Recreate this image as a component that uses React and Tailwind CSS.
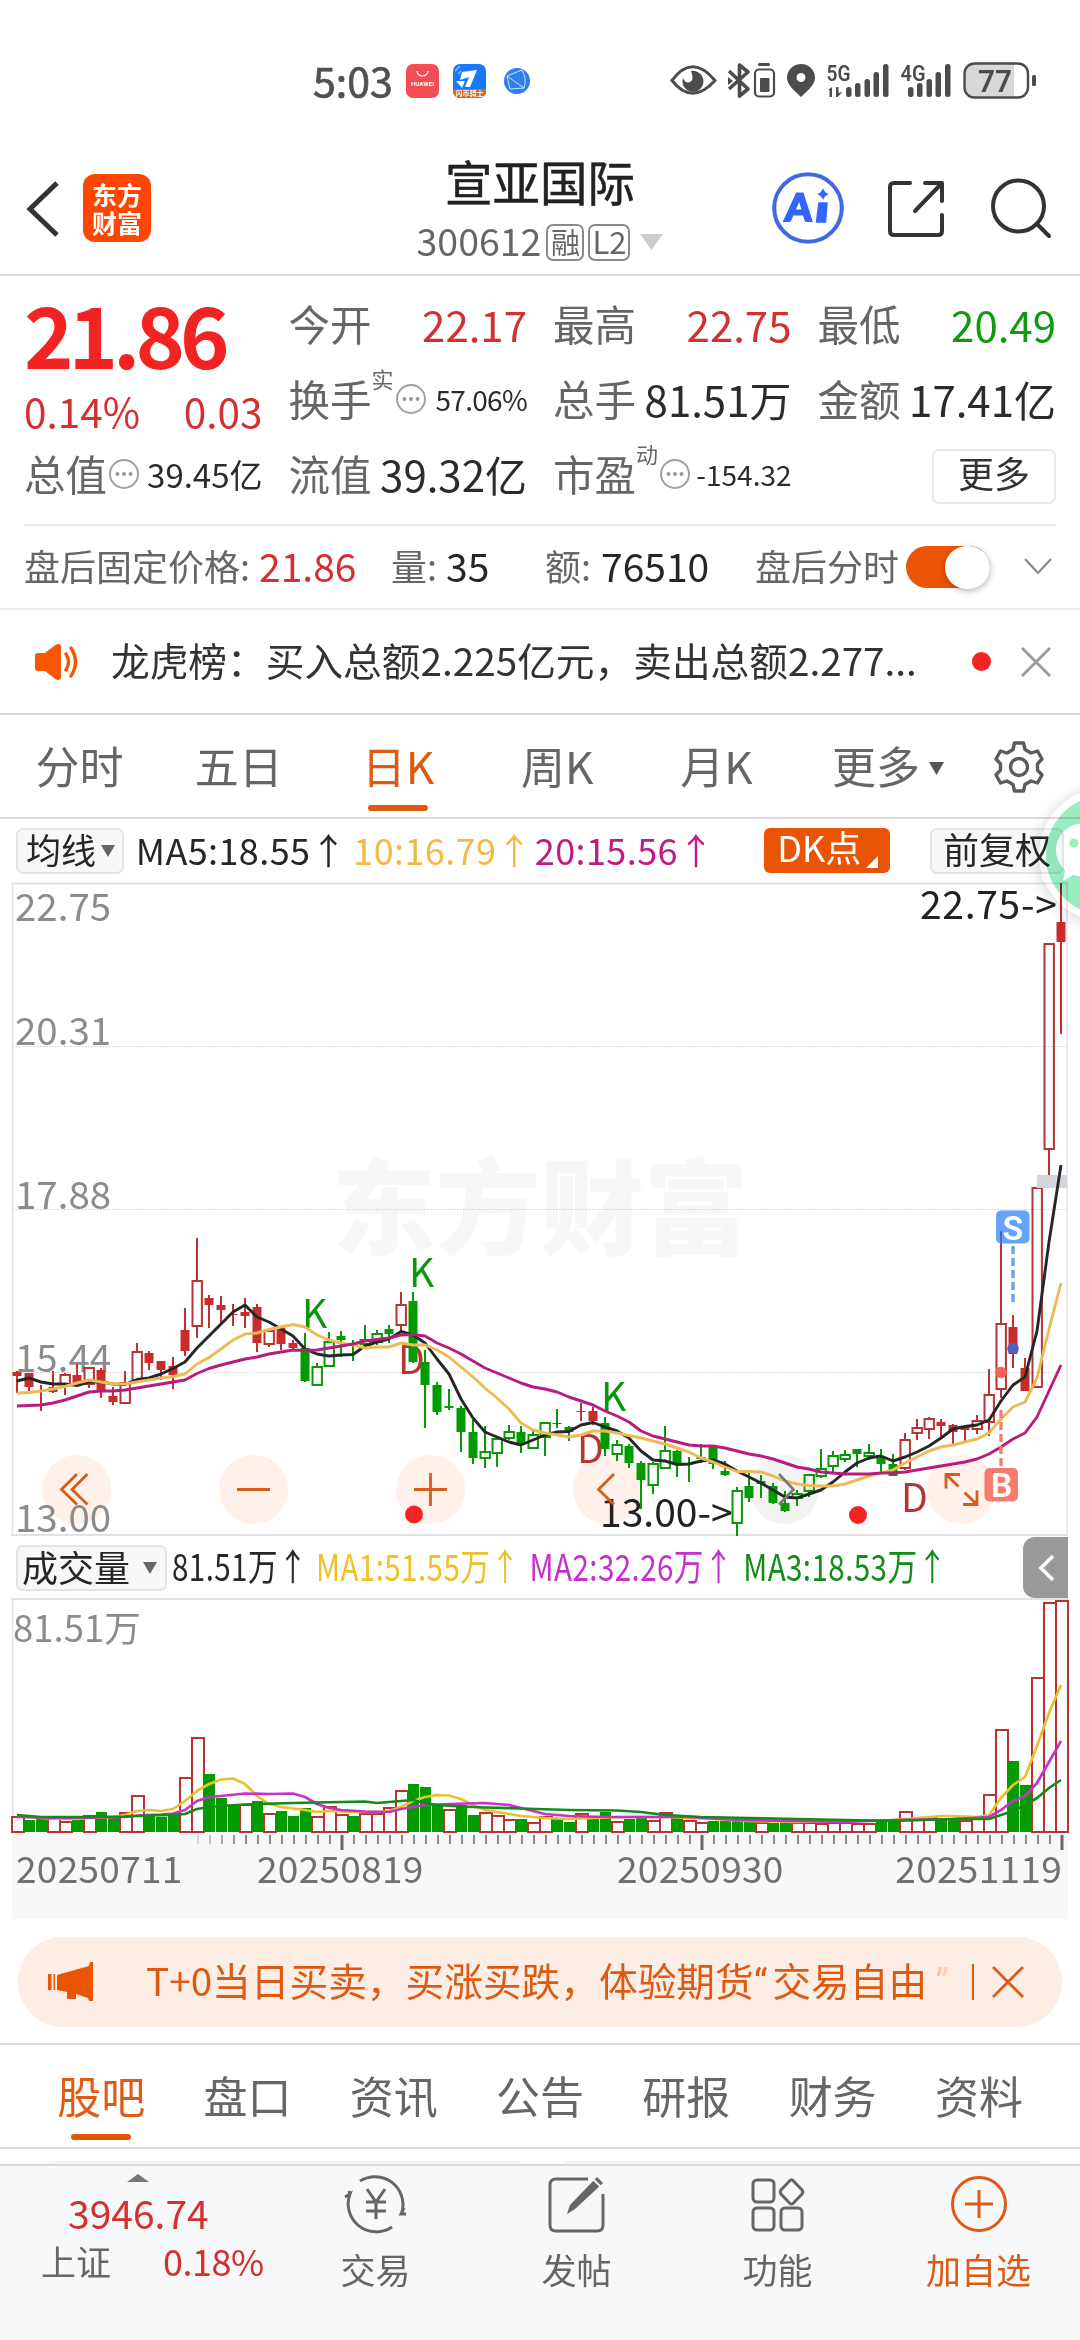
import React from 'react';

const RED = '#b83434';
const FILL_RED = '#c92c2c';
const GREEN = '#0a960a';
const FILL_GREEN = '#029c02';

// type, high, body top, body bottom, low
// r / g: filled body, R / G: hollow body, x / y: thin cross (red / green)
const candles = [
  ['r', 1371, 1372, 1376, 1393], ['r', 1373, 1373, 1387, 1391], ['x', 1385, 1390, 1391, 1411], ['r', 1371, 1387, 1392, 1393],
  ['R', 1373, 1374, 1384, 1395], ['r', 1364, 1375, 1383, 1385], ['R', 1367, 1367, 1384, 1388], ['r', 1368, 1370, 1392, 1398],
  ['r', 1387, 1396, 1402, 1405], ['R', 1371, 1382, 1403, 1403], ['R', 1343, 1351, 1380, 1383], ['r', 1351, 1353, 1363, 1370],
  ['r', 1361, 1361, 1370, 1380], ['r', 1357, 1366, 1375, 1389], ['r', 1308, 1330, 1351, 1356], ['R', 1238, 1280, 1326, 1338],
  ['r', 1295, 1298, 1305, 1328], ['r', 1296, 1305, 1310, 1323], ['x', 1304, 1314, 1315, 1326], ['r', 1298, 1312, 1316, 1328],
  ['r', 1304, 1307, 1343, 1352], ['R', 1330, 1330, 1344, 1347], ['r', 1327, 1328, 1344, 1350], ['r', 1340, 1343, 1348, 1350],
  ['g', 1333, 1348, 1381, 1382], ['G', 1363, 1366, 1385, 1385], ['G', 1332, 1341, 1366, 1366], ['g', 1331, 1336, 1340, 1357],
  ['y', 1340, 1344, 1345, 1361], ['G', 1325, 1339, 1344, 1347], ['G', 1330, 1333, 1342, 1345], ['g', 1325, 1329, 1334, 1343],
  ['R', 1292, 1304, 1325, 1331], ['g', 1292, 1301, 1362, 1363], ['g', 1350, 1362, 1385, 1428], ['g', 1382, 1385, 1412, 1415],
  ['g', 1389, 1406, 1408, 1410], ['g', 1406, 1408, 1432, 1452], ['g', 1420, 1432, 1458, 1464], ['G', 1426, 1451, 1458, 1468],
  ['G', 1437, 1438, 1453, 1467], ['G', 1425, 1431, 1438, 1440], ['g', 1426, 1432, 1444, 1453], ['G', 1430, 1434, 1448, 1448],
  ['G', 1422, 1422, 1437, 1456], ['y', 1409, 1423, 1424, 1428], ['g', 1426, 1427, 1432, 1441], ['x', 1403, 1411, 1412, 1421],
  ['r', 1407, 1411, 1421, 1425], ['g', 1417, 1423, 1449, 1456], ['G', 1440, 1444, 1454, 1461], ['g', 1444, 1446, 1463, 1468],
  ['g', 1461, 1463, 1480, 1509], ['G', 1462, 1463, 1485, 1494], ['G', 1426, 1450, 1468, 1468], ['g', 1450, 1451, 1463, 1477],
  ['y', 1457, 1463, 1464, 1482], ['y', 1444, 1457, 1459, 1463], ['g', 1445, 1447, 1464, 1469], ['g', 1461, 1471, 1475, 1476],
  ['G', 1487, 1490, 1523, 1536], ['g', 1473, 1486, 1498, 1502], ['g', 1475, 1481, 1484, 1498], ['g', 1483, 1486, 1503, 1504],
  ['g', 1491, 1503, 1511, 1512], ['G', 1490, 1493, 1498, 1506], ['G', 1474, 1474, 1491, 1497], ['G', 1449, 1468, 1476, 1478],
  ['G', 1451, 1455, 1466, 1472], ['G', 1450, 1454, 1459, 1462], ['g', 1449, 1449, 1454, 1467], ['G', 1444, 1452, 1456, 1460],
  ['g', 1449, 1458, 1464, 1472], ['g', 1454, 1464, 1476, 1476], ['R', 1433, 1439, 1468, 1470], ['R', 1419, 1427, 1433, 1440],
  ['R', 1417, 1418, 1429, 1439], ['r', 1419, 1422, 1426, 1437], ['r', 1424, 1425, 1432, 1444], ['r', 1427, 1427, 1430, 1442],
  ['R', 1415, 1420, 1429, 1434], ['R', 1369, 1394, 1422, 1436], ['R', 1231, 1323, 1389, 1398], ['r', 1315, 1327, 1354, 1368],
  ['r', 1358, 1368, 1391, 1391], ['R', 1187, 1187, 1387, 1387], ['R', 943, 943, 1149, 1176], ['r', 883, 922, 942, 1034],
];

const ma5 = [
  1381, 1378, 1382, 1384, 1384, 1385.5, 1382, 1382, 1384, 1384.5, 1379.5, 1378, 1374, 1368.5, 1362, 1348, 1336, 1324, 1312, 1305, 1317, 1322,
  1329, 1336, 1349, 1354, 1356, 1355, 1354.5, 1346, 1342, 1339, 1331.5, 1335, 1343, 1359, 1374, 1399, 1418, 1432, 1437, 1442, 1445, 1440,
  1435, 1432, 1431.5, 1425, 1422.5, 1427, 1431, 1438, 1451, 1460, 1461, 1464.5, 1464, 1461, 1460, 1464, 1471, 1477, 1483, 1490, 1497, 1498,
  1494, 1490, 1482, 1472, 1463, 1458, 1456, 1461, 1457, 1452, 1446, 1438, 1429, 1426.5, 1425, 1420, 1401, 1385, 1377, 1331, 1242, 1165,
];
const ma10 = [
  1393, 1392.5, 1391, 1389, 1386.5, 1383, 1380, 1382, 1384, 1384, 1382, 1380, 1378, 1376.5, 1374, 1364, 1357.5, 1349, 1340, 1334, 1333, 1329.5,
  1327, 1324.5, 1327, 1335, 1340, 1343, 1345, 1348, 1347, 1347, 1343, 1345, 1345, 1350, 1357, 1367, 1377, 1388, 1398, 1409, 1423, 1430,
  1433, 1435, 1437, 1435, 1431, 1431, 1433, 1435.5, 1438, 1441, 1444, 1448, 1452, 1458, 1462, 1467, 1471.5, 1471.5, 1472, 1476, 1481, 1484,
  1485.5, 1486, 1486, 1484, 1480, 1476, 1473, 1470, 1463, 1457, 1451, 1447, 1445, 1442, 1439, 1433, 1419, 1407, 1402, 1378, 1329, 1283,
];
const ma20 = [
  1406, 1405.5, 1405, 1403, 1400, 1396, 1392, 1391, 1391, 1390, 1388, 1386, 1384, 1382, 1380, 1373.5, 1368.5, 1365, 1362, 1359, 1357, 1354,
  1352, 1350, 1350.5, 1350, 1348, 1346, 1344, 1341, 1339.5, 1338, 1335, 1334.5, 1336, 1343, 1348, 1354, 1361, 1368, 1373, 1378, 1383, 1387,
  1389, 1392, 1397, 1401, 1405, 1411, 1416, 1422, 1431, 1436, 1439, 1442, 1445, 1446, 1446, 1448, 1451, 1454, 1456, 1459, 1463, 1467,
  1469, 1472, 1473, 1474, 1474, 1474, 1473, 1473, 1472, 1470, 1468, 1466, 1464, 1462, 1459, 1454, 1447, 1439, 1433, 1417, 1391, 1365,
];

const volTypes = 'RggRRgRggRRgggRRgggRgRgggRRRgRRRRgggRggRRRgRRggRggRggRRgRRggggRggRRRRRRRggRRRggRRRRggRRR';
const volTops = [
  1816, 1820, 1818, 1818, 1821, 1819, 1815, 1812, 1818, 1812, 1795, 1816, 1817, 1813, 1777, 1737, 1774, 1798, 1805, 1804, 1801, 1813,
  1811, 1816, 1808, 1816, 1806, 1814, 1816, 1813, 1813, 1807, 1790, 1784, 1787, 1806, 1809, 1805, 1815, 1812, 1815, 1819, 1819, 1822,
  1816, 1819, 1822, 1813, 1818, 1812, 1821, 1819, 1818, 1820, 1812, 1817, 1820, 1822, 1821, 1821, 1821, 1821, 1822, 1823, 1822, 1822,
  1822, 1823, 1822, 1822, 1823, 1823, 1822, 1822, 1811, 1817, 1817, 1819, 1819, 1820, 1816, 1794, 1729, 1761, 1785, 1677, 1602, 1600,
];

const volMa1 = '17,1816 41,1818 65,1819 77,1819 89,1818 113,1817 125,1815 137,1811 149,1810 161,1811 173,1809 185,1801 197,1791 209,1784 221,1779.5 233,1778.5 245,1784 257,1796 269,1804 281,1807 293,1808.5 305,1810 317,1812 329,1811 353,1812 377,1812 389,1811 401,1807 413,1801 425,1797 437,1795 449,1795.5 461,1799 473,1805 485,1810 497,1812 509,1814 521,1816 545,1818 569,1819 593,1818 629,1817 665,1817 701,1818.5 749,1821 797,1822 845,1821 893,1820 917,1818 941,1816 953,1816 977,1817 989,1815 1001,1798 1013,1785 1025,1777 1037,1746 1049,1713 1061,1685';
const volMa2 = '17,1817 65,1818 125,1817 137,1815.5 161,1814.5 173,1813.5 185,1810 197,1801 209,1797 221,1796 245,1793.5 269,1794 293,1793.5 305,1797 317,1804 329,1808 341,1810 365,1811.5 389,1812 401,1809 413,1807 425,1805 449,1804 485,1803 509,1805 521,1808 533,1811 545,1814 569,1816 605,1817 653,1817 689,1817 737,1820 797,1821 845,1822 893,1820 953,1819 989,1817 1001,1810 1013,1801 1025,1796 1037,1783 1049,1762 1061,1741';
const volMa3 = '17,1815 41,1817 89,1817 125,1816.5 149,1815.5 173,1815 185,1814 197,1809 209,1807 221,1806 245,1804.5 293,1803 341,1802 365,1801.5 377,1803 401,1801 413,1800 425,1803 437,1805 461,1806.5 485,1807.5 521,1808.5 569,1810 617,1810.5 641,1812 665,1815 701,1817 749,1818 797,1819 845,1820 893,1821 953,1819 989,1819 1001,1815 1013,1811 1025,1805 1037,1798 1049,1788 1061,1780';

const xOf = (i) => 17 + i * 12;
const toPoints = (arr) => arr.map((y, i) => `${xOf(i)},${y}`).join(' ');

const Candle = ({ data, x }) => {
  const [type, high, top, bottom, low] = data;
  const red = 'rRx'.includes(type);
  const line = red ? RED : GREEN;
  const fill = red ? FILL_RED : FILL_GREEN;
  if (type === 'x' || type === 'y') {
    return (
      <g fill={line}>
        <rect x={x - 1} y={high} width="2" height={low - high} />
        <rect x={x - 4.5} y={top} width="9" height={Math.max(bottom - top, 1)} />
      </g>
    );
  }
  if (type === 'R' || type === 'G') {
    return (
      <g>
        <rect x={x - 1} y={high} width="2" height={top - high} fill={line} />
        <rect x={x - 1} y={bottom} width="2" height={low - bottom} fill={line} />
        <rect x={x - 4.5} y={top + 1} width="9.4" height={bottom - top - 1} fill="none" stroke={line} strokeWidth="2" />
      </g>
    );
  }
  return (
    <g fill={fill}>
      <rect x={x - 1} y={high} width="2" height={low - high} />
      <rect x={x - 4.5} y={top} width="9" height={bottom - top} />
    </g>
  );
};

const StatusBar = () => (
  <div className="flex h-[160px] items-start pt-[62px] pl-[313px]">
    <span className="w-[93px] text-[41px] leading-[35px] text-[#505050] [-webkit-text-stroke:0.7px_#505050]">5:03</span>
    <div className="mt-[2px] flex w-[264px] items-center gap-[14px]">
      <svg width="33" height="34" viewBox="0 0 33 34">
        <rect width="33" height="34" rx="7" fill="#f34d54" />
        <path d="M11 7a5.5 5 0 0 0 11 0" fill="none" stroke="#fff" strokeWidth="1.2" />
        <text x="16.5" y="21.5" fill="#fff" fontSize="6.2" fontWeight="700" textAnchor="middle" fontFamily="Roboto">HUAWEI</text>
      </svg>
      <svg width="33" height="34" viewBox="0 0 33 34">
        <rect width="33" height="34" rx="7" fill="#1677ff" />
        <path d="M0 25h33v2a7 7 0 0 1-7 7H7a7 7 0 0 1-7-7z" fill="#d4681f" />
        <path d="M9 8l15-2-7 17h-5l4-10-9 3z" fill="#fff" />
        <path d="M3 17h9l-3 7z" fill="#fff" />
        <path d="M2 7l5-5M5 10l3-3" stroke="#9ccaff" strokeWidth="1.2" />
        <text x="16.5" y="32" fill="#fff" fontSize="7" fontWeight="700" textAnchor="middle">闪币骑士</text>
      </svg>
      <svg className="ml-[4px]" width="26" height="26" viewBox="0 0 26 26">
        <circle cx="13" cy="13" r="13" fill="#2f80ee" />
        <path d="M3 8l15-6M3 8l3 13M3 8l17 12M6 21l14-1M18 2q5 9 2 18" fill="none" stroke="#cfe3ff" strokeWidth="1" />
      </svg>
    </div>
    <svg width="370" height="38" viewBox="0 0 370 38" fill="#4c4c4c">
      {/* eye comfort */}
      <path d="M2 18.500Q22 -9 45 18.500Q22 44 2 18.500z" fill="none" stroke="#4c4c4c" strokeWidth="3" />
      <path d="M21 9a10.500 10.500 0 1 1-8 7q2 5 6 4.500 6-1.500 2-11.500z" />
      {/* bluetooth */}
      <path d="M59 9l19 18-8.500 7V3l8.500 7-19 17" fill="none" stroke="#4c4c4c" strokeWidth="3.600" strokeLinejoin="round" />
      <path d="M58 15l5 4-5 4z" />
      {/* device battery */}
      <rect x="88" y="1" width="12" height="3" rx="1.500" />
      <rect x="85" y="7.500" width="19" height="27" rx="4" fill="none" stroke="#4c4c4c" strokeWidth="2.200" />
      <rect x="90" y="16" width="9.500" height="14" rx="1" />
      {/* location */}
      <path fillRule="evenodd" d="M131 2a14 14 0 0 1 14 14c0 7-8 13-14 19-6-6-14-12-14-19A14 14 0 0 1 131 2zm0 9a4.500 4.500 0 1 0 0 9a4.500 4.500 0 0 0 0-9z" />
      {/* signal 5G */}
      <text x="156.500" y="18.500" fontSize="22" fontWeight="600" fontFamily="Roboto" textLength="24" lengthAdjust="spacingAndGlyphs">5G</text>
      <path d="M158 28l4-3v10h-2.500v-7zM166 25h2.500v6l4-1-5 5h-1.500z" />
      <rect x="176" y="25" width="5.500" height="10" rx="2.500" />
      <rect x="185" y="21" width="5.500" height="14" rx="2.500" />
      <rect x="194.500" y="17" width="5.500" height="18" rx="2.500" />
      <rect x="203.500" y="10" width="5.500" height="25" rx="2.500" />
      <rect x="213" y="2" width="5.500" height="33" rx="2.500" />
      {/* signal 4G */}
      <text x="230.500" y="18.500" fontSize="22" fontWeight="600" fontFamily="Roboto" textLength="25" lengthAdjust="spacingAndGlyphs">4G</text>
      <rect x="238" y="25" width="5.500" height="10" rx="2.500" />
      <rect x="247" y="21" width="5.500" height="14" rx="2.500" />
      <rect x="256.500" y="17" width="5.500" height="18" rx="2.500" />
      <rect x="265.500" y="10" width="5.500" height="25" rx="2.500" />
      <rect x="275" y="2" width="5.500" height="33" rx="2.500" />
      {/* battery level */}
      <path d="M302 2h42v33h-42a8 8 0 0 1-8-8v-17a8 8 0 0 1 8-8z" fill="#d8d8d8" />
      <rect x="294.500" y="1.500" width="63.500" height="34" rx="10" fill="none" stroke="#4c4c4c" strokeWidth="2.400" />
      <rect x="362" y="13" width="4" height="11" rx="1.500" />
      <text x="325" y="30" fontSize="32" fontWeight="600" textAnchor="middle" fontFamily="Roboto" textLength="34" lengthAdjust="spacingAndGlyphs">77</text>
    </svg>
  </div>
);

const Header = () => (
  <div className="grid h-[116px] grid-cols-[400px_280px_400px] border-b-2 border-[#dcdcdc]">
    <div className="flex items-start pt-[14px] pl-[24px]">
      <svg className="mt-[4px]" width="38" height="62" viewBox="0 0 38 62">
        <path d="M33 5L6 31l27 26" fill="none" stroke="#333" strokeWidth="5" />
      </svg>
      <div className="ml-[21px] flex h-[68px] w-[68px] flex-col items-center rounded-[12px] bg-[#fd4602] pt-[6px] text-[25px] leading-[28px] font-bold text-white">
        <span>东方</span>
        <span>财富</span>
      </div>
    </div>
    <div className="flex flex-col items-center text-center whitespace-nowrap">
      <div className="text-[47.500px] leading-[41px] text-[#222] [-webkit-text-stroke:0.5px_#222]">宣亚国际</div>
      <div className="mt-[22px] flex h-[38px] items-center">
        <span className="pb-1 text-[37.500px] leading-none text-[#666]">300612</span>
        <span className="ml-[5px] flex h-[37px] w-[38px] justify-center rounded-[7px] border-2 border-[#8a8a8a] text-[29px] leading-[30px] text-[#666]">融</span>
        <span className="ml-[4px] flex h-[37px] w-[42px] justify-center rounded-[7px] border-2 border-[#8a8a8a] text-[31px] leading-[29px] text-[#666]">L2</span>
        <svg className="ml-[10px]" width="23" height="16" viewBox="0 0 23 16">
          <path d="M0 0h23L11.500 16z" fill="#ccc" />
        </svg>
      </div>
    </div>
    <div className="flex items-start pt-[12px] pl-[92px]">
      <svg width="72" height="72" viewBox="0 0 72 72">
        <circle cx="36" cy="36" r="33.800" fill="none" stroke="#4068e4" strokeWidth="4" />
        <text x="13" y="49" fontSize="38" fontWeight="900" fill="#3366ff" stroke="#3366ff" strokeWidth="2" fontFamily="Lato" transform="skewX(-4) translate(3 0)">A</text>
        <path d="M47 31h8l-1.500 19h-9z" fill="#3366ff" stroke="#3366ff" strokeWidth="1.500" strokeLinejoin="round" />
        <path d="M51 16q1.500 5 6 6-4.500 1.500-6 6-1.500-4.500-6-6 4.500-1 6-6z" fill="#3366ff" />
      </svg>
      <svg className="ml-[42px] mt-[6px]" width="62" height="62" viewBox="0 0 62 62" fill="none" stroke="#333" strokeWidth="4" strokeLinecap="round" strokeLinejoin="round">
        <path d="M24 5H8q-4 0-4 4v44q0 4 4 4h44q4 0 4-4V37" />
        <path d="M39 5h17v18M56 5L29 33" />
      </svg>
      <svg className="ml-[41px] mt-[4px]" width="64" height="64" viewBox="0 0 64 64" fill="none" stroke="#333" strokeWidth="4" strokeLinecap="round">
        <circle cx="29.500" cy="30" r="25.500" />
        <path d="M48 48l12 12" />
      </svg>
    </div>
  </div>
);

const Dots = () => (
  <svg className="ml-[1px] shrink-0" width="32" height="32" viewBox="0 0 32 32">
    <circle cx="16" cy="16" r="14" fill="none" stroke="#a0a0a0" strokeWidth="2" />
    <g fill="#999">
      <circle cx="9.500" cy="16" r="2" />
      <circle cx="16" cy="16" r="2" />
      <circle cx="22.500" cy="16" r="2" />
    </g>
  </svg>
);

const Stat = ({ label, sup, dots, value, color = 'text-[#2b2b2b]', size = 'text-[42px]' }) => (
  <div className="flex h-[75px] items-center pb-[5px] leading-none whitespace-nowrap">
    <span className="text-[41.500px] text-[#666]">{label}</span>
    {sup && <span className="mb-[42px] w-[22px] text-[22px] text-[#666]">{sup}</span>}
    {dots && <Dots />}
    <span className={`ml-auto ${size} ${color}`}>{value}</span>
  </div>
);

const Quote = () => (
  <div className="flex h-[248px] flex-col px-[24px] pt-[13px]">
    <div className="grid grid-cols-4 gap-x-[26px]">
      <div className="row-span-2 flex flex-col">
        <div className="h-[86px] text-[84px] leading-[88px] font-bold tracking-[-5px] text-[#f22323]">21.86</div>
        <div className="flex justify-between pt-[16px] text-[40.500px] leading-none text-[#d43030]">
          <span>0.14%</span>
          <span>0.03</span>
        </div>
      </div>
      <Stat label="今开" value="22.17" color="text-[#d43030]" />
      <Stat label="最高" value="22.75" color="text-[#d43030]" />
      <Stat label="最低" value="20.49" color="text-[#109a10]" />
      <Stat label="换手" sup="实" dots value="57.06%" size="text-[28px] tracking-[-0.700px]" />
      <Stat label="总手" value="81.51万" />
      <Stat label="金额" value="17.41亿" />
      <Stat label="总值" dots value="39.45亿" size="text-[33px]" />
      <Stat label="流值" value="39.32亿" />
      <Stat label="市盈" sup="动" dots value="-154.32" size="text-[28px]" />
      <div className="flex h-[75px] items-center justify-end">
        <button className="h-[55px] w-[124px] rounded-[7px] border-2 border-[#e6e8eb] pb-[10px] text-[36px] leading-none text-[#333]">更多</button>
      </div>
    </div>
  </div>
);

const AfterHours = () => (
  <div className="border-b-2 border-[#ebebeb]">
    <div className="mx-[24px] flex h-[84px] items-center border-t-2 border-[#ebebeb] text-[36px] leading-none whitespace-nowrap text-[#666]">
      <span className="w-[235px] pb-1">盘后固定价格:</span>
      <span className="w-[132px] pb-1 text-[39px] text-[#d43030]">21.86</span>
      <span className="w-[55px] pb-1">量:</span>
      <span className="w-[99px] pb-1 text-[39px] text-[#262626]">35</span>
      <span className="w-[56px] pb-1">额:</span>
      <span className="w-[154px] pb-1 text-[39px] text-[#262626]">76510</span>
      <span className="w-[151px] pb-1">盘后分时</span>
      <span className="flex h-[42px] w-[84px] shrink-0 justify-end rounded-full bg-[#ea5504]">
        <span className="h-[43px] w-[45px] rounded-full bg-white shadow-[0_2px_6px_rgba(0,0,0,0.3)]" />
      </span>
      <svg className="ml-auto mr-[3px]" width="30" height="20" viewBox="0 0 30 20">
        <path d="M2 2l13 14L28 2" fill="none" stroke="#888" strokeWidth="2.200" />
      </svg>
    </div>
  </div>
);

const NewsRow = () => (
  <div className="flex h-[105px] items-center border-b-2 border-[#d9d9d9] pl-[33px]">
    <svg className="shrink-0" width="46" height="40" viewBox="0 0 46 40">
      <path d="M2 14q0-3 3-3h7L23 2.500q5-1.500 5 2v31q0 3.500-5 2L12 29H5q-3 0-3-3z" fill="#f95603" />
      <path d="M33 12q5 8 0 16M38 6q9 14 0 28" fill="none" stroke="#f95603" strokeWidth="3.400" strokeLinecap="round" />
    </svg>
    <span className="ml-[32px] w-[861px] pb-[5px] text-[38.700px] leading-none whitespace-nowrap text-[#333]">龙虎榜：买入总额2.225亿元，卖出总额2.277...</span>
    <span className="size-[19px] rounded-full bg-[#f22424]" />
    <svg className="ml-[29px]" width="32" height="32" viewBox="0 0 32 32">
      <path d="M2 2l28 28M30 2L2 30" stroke="#999" strokeWidth="2.800" />
    </svg>
  </div>
);

const ChartTabs = () => (
  <div className="flex h-[104px] border-b-2 border-[#dcdcdc] text-[44px] leading-none text-[#666]">
    <div className="flex w-[798px] pr-[2px]">
      {['分时', '五日', '日K', '周K', '月K'].map((t) => (
        <div key={t} className={`flex flex-1 flex-col items-center pt-[28px] ${t === '日K' ? 'text-[#dd5a10]' : ''}`}>
          {t}
          {t === '日K' && <span className="mt-[18px] h-[6px] w-[60px] rounded-full bg-[#dd5a10]" />}
        </div>
      ))}
    </div>
    <div className="flex pt-[28px] pl-[34px]">更多</div>
    <svg className="mt-[47px] ml-[9px]" width="15" height="13" viewBox="0 0 15 13">
      <path d="M0 0h15L7.500 13z" fill="#555" />
    </svg>
    <svg className="mt-[25px] ml-[48px]" width="54" height="54" viewBox="0 0 54 54" fill="none" stroke="#5c5c5c" strokeWidth="3.400" strokeLinejoin="round">
      <path d="M22.500 3h9l1.500 6.500 6 3.500 6.500-2 4.500 8-4.500 5v6l4.500 5-4.500 8-6.500-2-6 3.500L31.500 51h-9L21 44.500 15 41l-6.500 2L4 35l4.500-5v-6L4 19l4.500-8 6.500 2 6-3.500z" />
      <circle cx="27" cy="27" r="8.500" />
    </svg>
  </div>
);

const MaBar = () => (
  <div className="flex h-[63px] items-center px-[16px] text-[36px] leading-none whitespace-nowrap">
    <div className="flex h-[46px] w-[108px] items-center rounded-[7px] border-2 border-[#e2e4e8] bg-[#f7f8fa] pl-[8px] text-[#262626]">
      <span className="pb-[4px] text-[35px]">均线</span>
      <svg className="ml-[5px]" width="14" height="12" viewBox="0 0 14 12">
        <path d="M0 0h14L7 12z" fill="#666" />
      </svg>
    </div>
    <span className="ml-[12px] w-[218px] pb-[4px] tracking-[0.400px] text-[#262626]">MA5:18.55↑</span>
    <span className="w-[182px] pb-[4px] tracking-[0.400px] text-[#f1ba47]">10:16.79↑</span>
    <span className="w-[230px] pb-[4px] tracking-[0.400px] text-[#bf1b80]">20:15.56↑</span>
    <div className="flex h-[45px] w-[126px] rounded-[6px] bg-[#e95504] pl-[13px] text-[36px] text-white">
      DK点
      <svg className="ml-[5px] mt-[28px]" width="12" height="12" viewBox="0 0 12 12">
        <path d="M12 0v12H0z" fill="#fff" />
      </svg>
    </div>
    <div className="ml-[40px] h-[46px] w-[134px] shrink-0 rounded-[7px] border-2 border-[#e2e4e8] bg-[#f7f8fa] pl-[11px] text-[#262626]">前复权</div>
  </div>
);

const PriceChart = () => (
  <svg className="block" width="1080" height="655" viewBox="0 882 1080 655">
    <text x="332" y="1247" fontSize="104" fontWeight="900" fill="#f7f7f7">东方财富</text>
    <path d="M11 883.500H1068M11 1535H1068" stroke="#e2e2e2" strokeWidth="2" />
    <path d="M12.500 883V1536M1067 883V1536" stroke="#e2e2e2" strokeWidth="1.500" />
    <path d="M13 1046.500H1067M13 1209.500H1067M13 1372.500H1067" stroke="#d0d0d0" strokeWidth="1" strokeDasharray="1.500 1.500" />
    <g fill="#fff0e8" fillOpacity="0.95">
      <circle cx="76.500" cy="1489.500" r="34.500" />
      <circle cx="253.500" cy="1489.500" r="34.500" />
      <circle cx="430.500" cy="1489.500" r="34.500" />
      <circle cx="607.500" cy="1489.500" r="34.500" />
      <circle cx="961.500" cy="1489.500" r="34.500" />
    </g>
    <circle cx="784.500" cy="1489.500" r="34.500" fill="#f3f3f3" />
    <g fill="#8c8c8c" fontSize="38.500">
      <text x="15" y="921">22.75</text>
      <text x="15" y="1045">20.31</text>
      <text x="15" y="1209">17.88</text>
      <text x="15" y="1372">15.44</text>
      <text x="15" y="1531.500">13.00</text>
    </g>
    <g fontSize="39">
      <text x="398" y="1374" fill={RED}>D</text>
      <text x="577" y="1462.500" fill={RED}>D</text>
      <text x="901" y="1512" fill={RED}>D</text>
      <text x="302" y="1328" fill={GREEN}>K</text>
      <text x="409" y="1287" fill={GREEN}>K</text>
      <text x="601" y="1411" fill={GREEN}>K</text>
      <text x="920" y="919" fill="#222" letterSpacing="0.7">22.75-&gt;</text>
      <text x="600" y="1526.500" fill="#222">13.00-&gt;</text>
    </g>
    {candles.map((c, i) => (
      <Candle key={i} data={c} x={xOf(i)} />
    ))}
    <rect x="1037" y="1175" width="30" height="13" fill="#d3d6dc" />
    <g fill="none" strokeWidth="2.900" strokeLinejoin="round">
      <polyline points={toPoints(ma5)} stroke="#262626" />
      <polyline points={toPoints(ma10)} stroke="#edbb55" />
      <polyline points={toPoints(ma20)} stroke="#b81c7c" />
    </g>
    <g fill="none" stroke="#d75c1b" strokeWidth="2.800">
      <path d="M77 1474l-15.500 15.500L77 1504.500M87.500 1474L72 1489.500l15.500 15" />
      <path d="M237 1489.500h33" />
      <path d="M414 1489.500h33M430.500 1473v33" />
      <path d="M614 1474l-15.500 15.500 15.500 15" />
      <path d="M960 1474.500h-14v14M946 1474.500l12.500 12M963 1504.500h14v-14M977 1504.500l-12.500-12" />
    </g>
    <path d="M779 1474l14.500 15.500-14.500 15" fill="none" stroke="#777" strokeWidth="2.600" />
    <circle cx="414" cy="1514.500" r="9" fill="#f22424" />
    <circle cx="858" cy="1515" r="9" fill="#f22424" />
    <path d="M1013 1246v56" stroke="#67a1e8" strokeWidth="3.400" strokeDasharray="8 4" />
    <path d="M1001 1410v56" stroke="#ee8078" strokeWidth="3.400" strokeDasharray="8 4" />
    <circle cx="1013" cy="1348.500" r="5.800" fill="#4f62c4" />
    <circle cx="1001" cy="1372.500" r="5.800" fill="#fb6350" />
    <rect x="996" y="1210.500" width="33.500" height="33" rx="5" fill="#66a3fb" />
    <rect x="984.500" y="1468" width="33.500" height="33.500" rx="5" fill="#f87c6c" />
    <path d="M1001 1231v13" stroke="#4b68b8" strokeWidth="2" />
    <g fill="#fff" fontWeight="600" fontSize="34" textAnchor="middle" fontFamily="Roboto">
      <text x="1013" y="1239.500">S</text>
      <text x="1001.500" y="1497">B</text>
    </g>
  </svg>
);

const VolumeBar = () => (
  <div className="flex h-[61px] items-center pl-[16px] text-[37px] leading-none whitespace-nowrap">
    <div className="flex h-[46px] w-[151px] shrink-0 items-center rounded-[7px] border-2 border-[#e2e4e8] bg-[#f7f8fa] pl-[4px] text-[36px] text-[#262626]">
      <span className="pb-[4px]">成交量</span>
      <svg className="ml-[13px]" width="14" height="12" viewBox="0 0 14 12">
        <path d="M0 0h14L7 12z" fill="#666" />
      </svg>
    </div>
    <div className="ml-[5px] flex w-[851px] shrink-0 origin-left scale-x-80 pb-[4px] tracking-[0.500px]">
      <span className="w-[180px] shrink-0 text-[#262626]">81.51万↑</span>
      <span className="w-[267px] shrink-0 text-[#edc02c]">MA1:51.55万↑</span>
      <span className="w-[267px] shrink-0 text-[#c62fc8]">MA2:32.26万↑</span>
      <span className="w-[267px] shrink-0 text-[#148c18]">MA3:18.53万↑</span>
    </div>
    <div className="flex h-[61px] w-[45px] shrink-0 items-center justify-center rounded-l-[12px] bg-[#999]">
      <svg width="20" height="30" viewBox="0 0 20 30">
        <path d="M17 3L5 15l12 12" fill="none" stroke="#fff" strokeWidth="3.600" />
      </svg>
    </div>
  </div>
);

const VolumeChart = () => (
  <svg className="block" width="1080" height="321" viewBox="0 1598 1080 321">
    <rect x="12" y="1833" width="1056" height="86" fill="#f7f8fa" />
    <path d="M11 1599H1068" stroke="#e2e2e2" strokeWidth="2" />
    <path d="M12.500 1599V1833M1067 1599V1833" stroke="#e2e2e2" strokeWidth="1.500" />
    <text x="13" y="1642" fontSize="36.500" fill="#8c8c8c">81.51万</text>
    {volTops.map((top, i) =>
      volTypes[i] === 'R' ? (
        <rect key={i} x={xOf(i) - 5} y={top + 1} width="12" height={1831 - top} fill="#fff" stroke={RED} strokeWidth="2" />
      ) : (
        <rect key={i} x={xOf(i) - 5} y={top} width="11" height={1832 - top} fill={FILL_GREEN} />
      )
    )}
    <g fill="none" strokeWidth="2.700" strokeLinejoin="round">
      <polyline points={volMa1} stroke="#e8c12f" />
      <polyline points={volMa2} stroke="#c733c9" />
      <polyline points={volMa3} stroke="#148a18" />
    </g>
    {volTops.map((_, i) => {
      if (i < 15) return null;
      const major = (i - 27) % 30 === 0;
      return (
        <rect
          key={i}
          x={xOf(i) + (major ? -0.5 : 0)}
          y="1835"
          width={major ? 3 : 2}
          height={major ? 15 : 9}
          fill={major ? '#666' : '#8a8a8a'}
          opacity={i < 19 ? 0.3 + (i - 15) * 0.2 : 1}
        />
      );
    })}
    <g fontSize="37" fill="#707070" letterSpacing="0.3">
      <text x="16" y="1883">20250711</text>
      <text x="257" y="1883">20250819</text>
      <text x="617" y="1883">20250930</text>
      <text x="1062" y="1883" textAnchor="end">20251119</text>
    </g>
  </svg>
);

const Banner = () => (
  <div className="mx-[18px] mt-[18px] mb-[16px] flex h-[90px] items-center rounded-full bg-[#fceee5] pl-[29px] text-[#dc5a12]">
    <svg className="shrink-0" width="48" height="42" viewBox="0 0 48 42" fill="#ea5504">
      <path d="M46 1v39h-4l-1-3-12-4v5h-9v-7l-10-2V14L42 5l1-4z" />
      <path d="M1 13h3.500v16H1zM6.500 13H8v16H6.500z" />
    </svg>
    <div className="relative ml-[51px] h-[52px] w-[812px] overflow-hidden text-[38.700px] leading-[46px] whitespace-nowrap">
      T+0当日买卖，买涨买跌，体验期货<span className="font-['Roboto']">“</span><span className="ml-[5px]">交易自由</span><span className="ml-[8px] font-['Roboto']">”</span>：
      <div className="absolute top-0 right-0 h-full w-[32px] bg-linear-to-r from-[#fceee5]/50 to-[#fceee5]" />
    </div>
    <span className="ml-[14px] h-[36px] w-[2px] bg-[#dc5a12]" />
    <svg className="ml-[17px]" width="34" height="34" viewBox="0 0 34 34">
      <path d="M2 2l30 30M32 2L2 32" stroke="#dc5a12" strokeWidth="2.800" />
    </svg>
  </div>
);

const InfoTabs = () => (
  <div className="flex h-[106px] border-y-2 border-[#d9dadd] px-[28px] text-[44px] leading-none text-[#666]">
    {['股吧', '盘口', '资讯', '公告', '研报', '财务', '资料'].map((t, i) => (
      <div key={t} className={`flex w-[146.300px] shrink-0 flex-col items-center pt-[28px] ${i === 0 ? 'text-[#e05a10]' : ''}`}>
        {t}
        {i === 0 && <span className="mt-[17px] h-[6px] w-[60px] rounded-full bg-[#e25608]" />}
      </div>
    ))}
  </div>
);

const NavItem = ({ label, active, children }) => (
  <div className={`flex w-[201px] flex-col items-center pt-[6px] text-[35px] leading-none ${active ? 'text-[#dc5a12]' : 'text-[#666]'}`}>
    <svg width="64" height="64" viewBox="0 0 64 64" fill="none" stroke="currentColor" strokeWidth="3">
      {children}
    </svg>
    <span className="mt-[15px]">{label}</span>
  </div>
);

const BottomNav = () => (
  <div className="flex h-[176px] border-t-2 border-[#d5d8dc] bg-[#f7f8fa]">
    <div className="flex w-[275px] flex-col pt-[8px] leading-none text-[#d43030]">
      <svg className="ml-[127px]" width="22" height="8" viewBox="0 0 22 8">
        <path d="M11 0l11 8H0z" fill="#777" />
      </svg>
      <span className="ml-[68px] mt-[11px] text-[39px]">3946.74</span>
      <div className="mt-[10px] flex items-center">
        <span className="ml-[41px] w-[122px] text-[35px] text-[#666]">上证</span>
        <span className="text-[36px] tracking-[-0.500px]">0.18%</span>
      </div>
    </div>
    <NavItem label="交易">
      <path d="M16 9A28 28 0 0 1 58 40l2-4M58 40l-1 2h5M48 55A28 28 0 0 1 6 22L1 25M6 22l-1-3" />
      <path d="M23 17l9 13 9-13M22 30h20M22 39h20M32 30v17" />
    </NavItem>
    <NavItem label="发帖">
      <path d="M43 7H11q-6 0-6 6v40q0 6 6 6h41q6 0 6-6V22" />
      <path d="M22 42l3-9L52 5l6 6-28 26z" fill="currentColor" stroke="none" />
      <path d="M47 6l9 9" stroke="#f7f8fa" strokeWidth="2" />
    </NavItem>
    <NavItem label="功能">
      <rect x="7" y="8" width="21" height="22" rx="4" />
      <rect x="7" y="36" width="21" height="22" rx="4" />
      <rect x="35" y="36" width="21" height="22" rx="4" />
      <path d="M43.500 9q2-2.500 4 0l8.500 9q1.500 2 0 4l-8.500 9q-2 2-4 0L35 22q-1.500-2 0-4z" />
    </NavItem>
    <NavItem label="加自选" active>
      <circle cx="32" cy="32" r="26.500" />
      <path d="M18 32h28M32 18v28" />
    </NavItem>
  </div>
);

const App = () => (
  <div className="relative h-[2340px] w-[1080px] overflow-hidden bg-white font-['Noto_Sans_CJK_SC',sans-serif]">
    <StatusBar />
    <Header />
    <Quote />
    <AfterHours />
    <NewsRow />
    <ChartTabs />
    <MaBar />
    <PriceChart />
    <VolumeBar />
    <VolumeChart />
    <Banner />
    <InfoTabs />
    <div className="flex h-[15px] items-end gap-[43px] pl-[48px]">
      <div className="h-[3px] w-[473px] rounded-t bg-[#fbf2ee]" />
      <div className="h-[3px] w-[477px] rounded-t bg-[#fbf2ee]" />
    </div>
    <BottomNav />
    {/* floating chat bubble */}
    <div className="absolute top-[788px] left-[1039px] size-[134px] rounded-full border-[7px] border-white bg-[#9aecc1] mix-blend-multiply shadow-[0_2px_16px_rgba(0,0,0,0.18)]">
      <svg width="120" height="120" viewBox="0 0 120 120">
        <path d="M40 28C20 28 10 42 10 55c0 9 4 15 9 20l-2 11 10-6c22 6 48-4 48-25C75 40 60 28 40 28z" fill="#fff" />
        <circle cx="28" cy="48" r="4.500" fill="#9aecc1" />
      </svg>
    </div>
  </div>
);

export default App;
